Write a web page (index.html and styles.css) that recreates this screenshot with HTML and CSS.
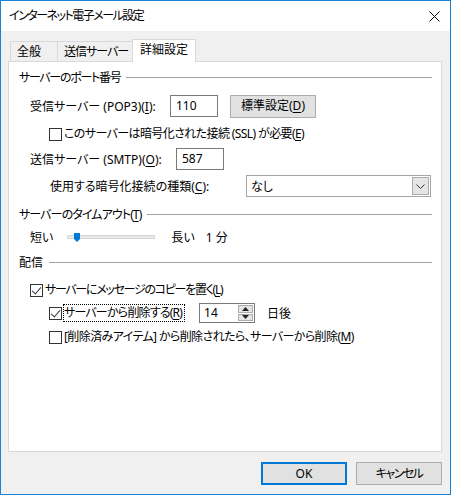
FILE: index.html
```html
<!DOCTYPE html>
<html lang="ja">
<head>
  <meta charset="UTF-8" />
  <title>インターネット電子メール設定</title>
  <link rel="stylesheet" href="styles.css">
</head>
<body>
  <div class="window">
    <div class="titlebar">
      <span class="title">インターネット電子メール設定</span>
      <svg class="close" width="11" height="11" viewBox="0 0 11 11">
        <path d="M0.5 0.5 L10.5 10.5 M10.5 0.5 L0.5 10.5" stroke="#000" stroke-width="1" fill="none" />
      </svg>
    </div>

    <div class="client">
      <div class="tabs">
        <div class="tab tab-general">全般</div>
        <div class="tab tab-send">送信サーバー</div>
        <div class="tab active">詳細設定</div>
      </div>

      <div class="panel">
        <div class="group-head head-port"><span>サーバーのポート番号</span></div>

        <div class="row row-pop">
          <span class="lbl lbl-pop">受信サーバー (POP3)(<u>I</u>):</span>
          <div class="textbox">110</div>
          <button class="btn btn-std">標準設定(<u>D</u>)</button>
        </div>

        <div class="row row-ssl">
          <span class="check"></span>
          <span class="cb-text">このサーバーは暗号化された接続 (SSL) が必要(<u>E</u>)</span>
        </div>

        <div class="row row-smtp">
          <span class="lbl lbl-smtp">送信サーバー (SMTP)(<u>O</u>):</span>
          <div class="textbox">587</div>
        </div>

        <div class="row row-enc">
          <span class="lbl lbl-enc">使用する暗号化接続の種類(<u>C</u>):</span>
          <div class="select">
            <span class="select-value">なし</span>
            <span class="select-arrow">
              <svg width="9" height="5" viewBox="0 0 9 5">
                <path d="M0.5 0.5 L4.5 4.5 L8.5 0.5" stroke="#333" fill="none" />
              </svg>
            </span>
          </div>
        </div>

        <div class="group-head head-timeout"><span>サーバーのタイムアウト(<u>T</u>)</span></div>

        <div class="row row-slider">
          <span class="slider-short">短い</span>
          <div class="slider">
            <div class="slider-track"></div>
            <svg class="slider-thumb" width="6" height="9" viewBox="0 0 6 9">
              <path d="M0 0 H6 V6 L3 9 L0 6 Z" fill="#0078d7" />
            </svg>
          </div>
          <span class="slider-long">長い</span>
          <span class="slider-value">1 分</span>
        </div>

        <div class="group-head head-deliver"><span>配信</span></div>

        <div class="row row-copy">
          <span class="check checked"></span>
          <span class="cb-text">サーバーにメッセージのコピーを置く(<u>L</u>)</span>
        </div>

        <div class="row row-delete">
          <span class="check checked"></span>
          <span class="cb-text focus">サーバーから削除する(<u>R</u>)</span>
          <div class="spinner">
            <span class="spinner-value">14</span>
            <span class="spinner-buttons">
              <span class="spin-btn">
                <svg width="7" height="4" viewBox="0 0 7 4"><path d="M0 4 L3.5 0 L7 4 Z" fill="#222" /></svg>
              </span>
              <span class="spin-btn">
                <svg width="7" height="4" viewBox="0 0 7 4"><path d="M0 0 L3.5 4 L7 0 Z" fill="#222" /></svg>
              </span>
            </span>
          </div>
          <span class="days">日後</span>
        </div>

        <div class="row row-trash">
          <span class="check"></span>
          <span class="cb-text">[削除済みアイテム] から削除されたら、サーバーから削除(<u>M</u>)</span>
        </div>
      </div>

      <div class="footer">
        <button class="btn btn-ok">OK</button>
        <button class="btn btn-cancel">キャンセル</button>
      </div>
    </div>
  </div>
</body>
</html>
```

FILE: styles.css
```css
* {
  box-sizing: border-box;
}
body {
  margin: 0;
  font-family: "Noto Sans", "Noto Sans CJK JP", sans-serif;
  font-size: 12px;
  color: #000;
  /* proportional kana, closer to Yu Gothic UI */
  font-feature-settings: "palt";
}
u {
  text-decoration: underline;
  text-underline-offset: 2px;
}
.window {
  width: 451px;
  height: 495px;
  border: 1px solid #1883d7;
  background: #f0f0f0;
  display: flex;
  flex-direction: column;
}
.titlebar {
  height: 30px;
  background: #fff;
  display: flex;
  align-items: center;
  justify-content: space-between;
  padding: 0 10px 0 8px;
}
.title {
  line-height: 16px;
  letter-spacing: -1.5px;
}
.close {
  display: block;
}
.client {
  flex: 1;
  display: flex;
  flex-direction: column;
  padding: 8px 8px 0 7px;
}

/* tabs */
.tabs {
  display: flex;
  align-items: flex-end;
  height: 22px;
  padding-left: 2px;
  position: relative;
  z-index: 1;
}
.tab {
  height: 20px;
  border: 1px solid #d9d9d9;
  border-bottom: none;
  background: #f0f0f0;
  padding: 0 6px;
  line-height: 19px;
  white-space: nowrap;
}
.tab-general {
  width: 48px;
}
.tab-send {
  width: 75px;
  border-left: none;
  letter-spacing: -1px;
}
.tab.active {
  height: 23px;
  margin-bottom: -1px;
  width: 64px;
  margin-left: -1px;
  background: #fff;
  padding: 0 7px;
  line-height: 20px;
}

/* panel */
.panel {
  width: 434px;
  height: 391px;
  background: #fff;
  border: 1px solid #d9d9d9;
  padding: 7px 9px 0 10px;
}
.group-head {
  display: flex;
  align-items: center;
  height: 16px;
  gap: 6px;
  white-space: nowrap;
}
.group-head::after {
  content: "";
  flex: 1;
  height: 1px;
  background: #a0a0a0;
  margin-top: 1px;
}
.head-port span {
  letter-spacing: -1.3px;
}
.row {
  display: flex;
  align-items: center;
  white-space: nowrap;
}
.lbl {
  flex: none;
}
.row-pop {
  height: 22px;
  margin-top: 10px;
  padding-left: 11px;
}
.lbl-pop {
  width: 140px;
}
.textbox {
  width: 48px;
  height: 22px;
  border: 1px solid #7a7a7a;
  padding: 0 5px;
  line-height: 20px;
}
.btn {
  font: inherit;
  color: #000;
  background: #e1e1e1;
  border: 1px solid #adadad;
  padding: 0;
  height: 23px;
  width: 86px;
  line-height: 20px;
}
.btn-std {
  margin-left: 12px;
}
.btn-cancel {
  letter-spacing: -1.5px;
}
.row-ssl {
  height: 16px;
  margin-top: 9px;
  padding-left: 30px;
}
.row-ssl .cb-text {
  letter-spacing: -0.6px;
}
.check {
  flex: none;
  width: 13px;
  height: 13px;
  border: 1px solid #333;
  background: #fff;
  margin-right: 2px;
  position: relative;
}
.check.checked::after {
  content: "";
  position: absolute;
  left: 3px;
  top: 0px;
  width: 4px;
  height: 8px;
  border: solid #333;
  border-width: 0 1px 1px 0;
  transform: rotate(40deg);
}
.cb-text {
  line-height: 16px;
}
.row-smtp {
  height: 22px;
  margin-top: 6px;
  padding-left: 11px;
}
.lbl-smtp {
  width: 146px;
}
.row-enc {
  height: 22px;
  margin-top: 5px;
  padding-left: 31px;
}
.lbl-enc {
  width: 196px;
}
.select {
  width: 185px;
  height: 22px;
  border: 1px solid #a6a6a6;
  display: flex;
  align-items: center;
  justify-content: space-between;
  padding: 0 1px 0 4px;
}
.select-arrow {
  width: 17px;
  height: 18px;
  background: #e5e5e5;
  border: 1px solid #acacac;
  display: flex;
  align-items: center;
  justify-content: center;
}
.select-arrow svg {
  display: block;
}
.head-timeout {
  margin-top: 9px;
}
.head-timeout span {
  letter-spacing: -0.9px;
}
.row-slider {
  height: 16px;
  margin-top: 7px;
  padding-left: 11px;
}
.slider {
  width: 88px;
  height: 16px;
  margin-left: 14px;
  position: relative;
  display: flex;
  align-items: center;
}
.slider-track {
  width: 100%;
  height: 4px;
  background: #e7eaea;
  border: 1px solid #d6d6d6;
}
.slider-thumb {
  position: absolute;
  left: 7px;
  top: 4px;
}
.slider-long {
  margin-left: 16px;
}
.slider-value {
  margin-left: 11px;
}
.head-deliver {
  margin-top: 9px;
}
.row-copy {
  height: 16px;
  margin-top: 12px;
  padding-left: 11px;
}
.row-copy .cb-text {
  letter-spacing: -1.3px;
}
.row-delete {
  height: 20px;
  margin-top: 5px;
  padding-left: 30px;
}
.row-delete .cb-text {
  letter-spacing: -0.8px;
}
.focus {
  outline: 1px dotted #000;
  outline-offset: 0;
  padding-right: 2px;
}
.spinner {
  width: 56px;
  height: 20px;
  border: 1px solid #7a7a7a;
  display: flex;
  justify-content: space-between;
}
.row-delete .spinner {
  margin-left: 15px;
}
.spinner-value {
  line-height: 18px;
  padding-left: 4px;
}
.spinner-buttons {
  width: 16px;
  display: flex;
  flex-direction: column;
  gap: 1px;
  padding: 1px 1px 1px 0;
}
.spin-btn {
  flex: 1;
  background: #e5e5e5;
  border: 1px solid #acacac;
  display: flex;
  align-items: center;
  justify-content: center;
}
.spin-btn svg {
  display: block;
}
.days {
  margin-left: 12px;
}
.row-trash {
  height: 16px;
  margin-top: 6px;
  padding-left: 30px;
}
.row-trash .cb-text {
  letter-spacing: -0.6px;
}

/* footer */
.footer {
  display: flex;
  justify-content: flex-end;
  gap: 9px;
  margin-top: 10px;
}
.btn-ok {
  border: 2px solid #0078d7;
}
```
